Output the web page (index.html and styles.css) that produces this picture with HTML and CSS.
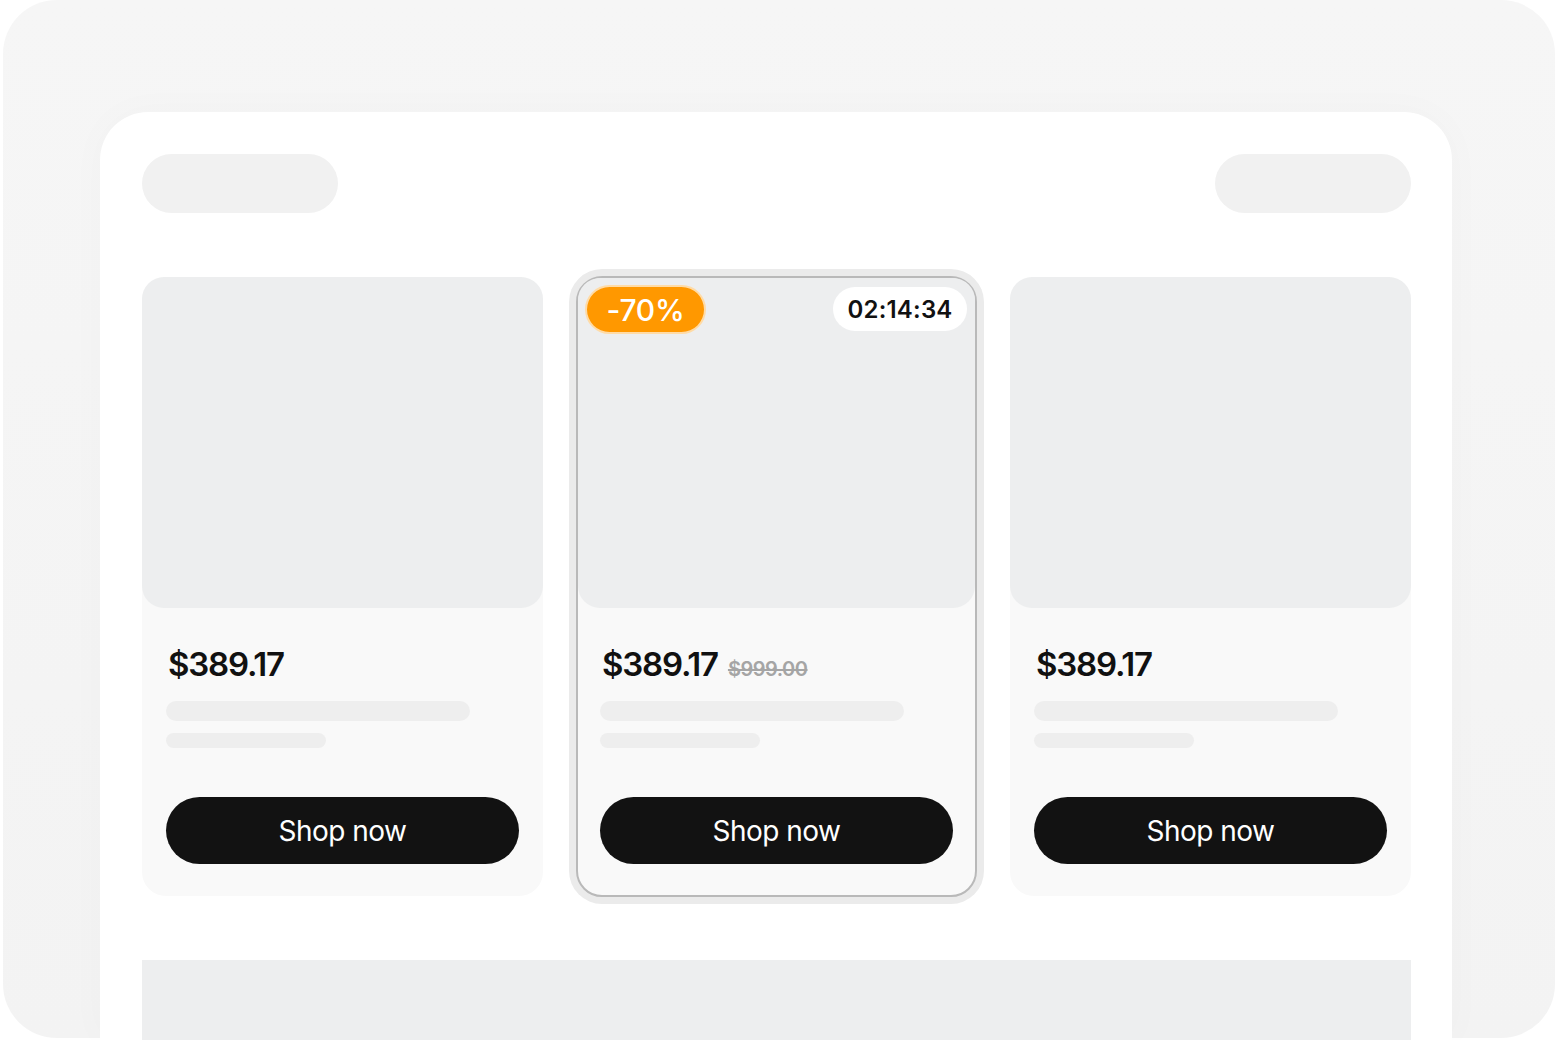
FILE: index.html
```html
<!DOCTYPE html>
<html lang="en">
<head>
<meta charset="utf-8">
<title>Deals</title>
<link rel="stylesheet" href="styles.css">
</head>
<body>
<div class="frame">
  <div class="panel">
    <div class="topbar">
      <div class="pill"></div>
      <div class="pill"></div>
    </div>
    <div class="cards">
      <div class="card">
        <div class="image"></div>
        <div class="body">
          <div class="price-row"><span class="price">$389.17</span></div>
          <div class="line long"></div>
          <div class="line short"></div>
          <button class="shop">Shop now</button>
        </div>
      </div>
      <div class="card featured">
        <div class="image">
          <span class="badge">-70%</span>
          <span class="timer">02:14:34</span>
        </div>
        <div class="body">
          <div class="price-row"><span class="price">$389.17</span><span class="old">$999.00</span></div>
          <div class="line long"></div>
          <div class="line short"></div>
          <button class="shop">Shop now</button>
        </div>
      </div>
      <div class="card">
        <div class="image"></div>
        <div class="body">
          <div class="price-row"><span class="price">$389.17</span></div>
          <div class="line long"></div>
          <div class="line short"></div>
          <button class="shop">Shop now</button>
        </div>
      </div>
    </div>
    <div class="bottom-block"></div>
  </div>
</div>
</body>
</html>
```

FILE: styles.css
```css
html, body {
  margin: 0;
  padding: 0;
  background: #ffffff;
  height: 1040px;
  overflow: hidden;
  font-family: Inter, "Noto Sans", "Liberation Sans", sans-serif;
}

.frame {
  margin: 0 3px;
  height: 1038px;
  border-radius: 54px;
  background: linear-gradient(180deg, #f6f6f6 0%, #f3f3f3 100%);
  padding: 112px 103px 0 97px;
  box-sizing: border-box;
}

.panel {
  background: #ffffff;
  border-radius: 48px 48px 0 0;
  height: 928px;
  padding: 42px 41px 0 42px;
  box-sizing: border-box;
  box-shadow: 0 0 40px rgba(0, 0, 0, 0.025);
}

.topbar {
  display: flex;
  justify-content: space-between;
}

.pill {
  width: 196px;
  height: 59px;
  border-radius: 30px;
  background: #f1f1f1;
}

.cards {
  margin-top: 64px;
  display: grid;
  grid-template-columns: repeat(3, 1fr);
  gap: 33px;
  align-items: start;
}

.card {
  background: #f9f9f9;
  border-radius: 24px;
  display: flex;
  flex-direction: column;
}

.card.featured {
  border: 2px solid #b9b9b9;
  box-shadow: 0 0 0 7px #ebebeb;
  border-radius: 26px;
  margin: -1px 0;
}

.image {
  height: 331px;
  background: #edeeef;
  border-radius: 22px;
  position: relative;
}

.featured .image {
  height: 330px;
}

.featured .body {
  padding: 36px 22px 31px 22px;
}

.badge {
  position: absolute;
  left: 7px;
  top: 7px;
  width: 121px;
  height: 49px;
  box-sizing: border-box;
  border: 2px solid rgba(255, 255, 255, 0.65);
  border-radius: 25px;
  background: #ff9800;
  color: #ffffff;
  font-size: 30px;
  font-weight: 500;
  display: flex;
  align-items: center;
  justify-content: center;
  letter-spacing: -0.3px;
}

.timer {
  position: absolute;
  right: 8px;
  top: 9px;
  width: 134px;
  height: 44px;
  border-radius: 22px;
  background: #ffffff;
  color: #111111;
  font-size: 24px;
  font-weight: 600;
  display: flex;
  align-items: center;
  justify-content: center;
  letter-spacing: 0.2px;
}

.body {
  padding: 36px 24px 32px 24px;
  display: flex;
  flex-direction: column;
}

.price-row {
  height: 40px;
  display: flex;
  align-items: baseline;
  gap: 10px;
  padding-left: 2px;
}

.price {
  font-size: 33px;
  line-height: 40px;
  font-weight: 600;
  color: #111111;
  letter-spacing: -1.2px;
}

.old {
  font-size: 20px;
  font-weight: 600;
  color: #a5a5a5;
  text-decoration: line-through;
  letter-spacing: -0.5px;
}

.line {
  background: #eeeeee;
  border-radius: 10px;
}

.line.long {
  margin-top: 17px;
  width: 304px;
  height: 20px;
}

.line.short {
  margin-top: 12px;
  width: 160px;
  height: 15px;
}

.shop {
  margin-top: 49px;
  height: 67px;
  width: 100%;
  border: none;
  border-radius: 34px;
  background: #121212;
  color: #ffffff;
  font-family: inherit;
  font-size: 28px;
  font-weight: 400;
  letter-spacing: -0.5px;
  cursor: pointer;
}

.bottom-block {
  margin-top: 64px;
  height: 100px;
  background: #edeeef;
}
```
